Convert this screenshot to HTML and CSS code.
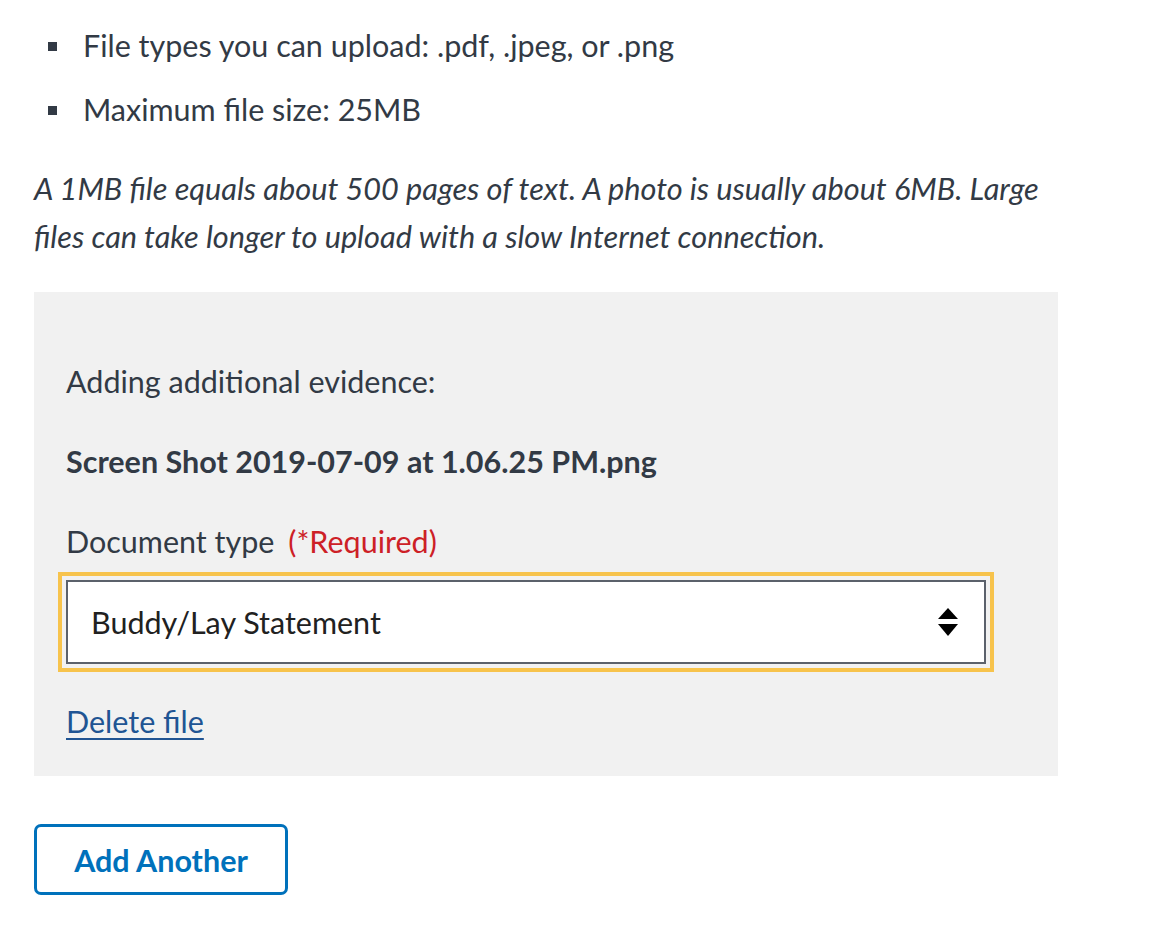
FILE: index.html
```html
<!DOCTYPE html>
<html lang="en">
<head>
<meta charset="utf-8">
<title>Upload evidence</title>
<link rel="stylesheet" href="styles.css">
</head>
<body>
<main class="page">
  <ul class="rules">
    <li class="rule">File types you can upload: .pdf, .jpeg, or .png</li>
    <li class="rule">Maximum file size: 25MB</li>
  </ul>
  <p class="hint">A 1MB file equals about 500 pages of text. A photo is usually about 6MB. Large files can take longer to upload with a slow Internet connection.</p>

  <section class="file-card">
    <p class="card-intro">Adding additional evidence:</p>
    <p class="file-name">Screen Shot 2019-07-09 at 1.06.25 PM.png</p>
    <label class="field-label" for="doctype">Document type <span class="required">(*Required)</span></label>
    <div class="select-wrap">
      <select id="doctype" class="select">
        <option>Buddy/Lay Statement</option>
      </select>
      <svg class="select-arrows" width="20" height="28" viewBox="0 0 20 28" aria-hidden="true">
        <path d="M10 0 L20 11 L0 11 Z" fill="#000"/>
        <path d="M0 16 L20 16 L10 28 Z" fill="#000"/>
      </svg>
    </div>
    <a class="delete-link" href="#">Delete file</a>
  </section>

  <button class="add-btn" type="button">Add Another</button>
</main>
</body>
</html>
```

FILE: styles.css
```css
html, body {
  margin: 0;
  padding: 0;
  background: #ffffff;
}

body {
  font-family: "Lato", "Liberation Sans", sans-serif;
  font-size: 30.5px;
  line-height: 48px;
  color: #323a45;
}

.page {
  padding: 21px 0 40px 34px;
  width: 1024px;
}

.rules {
  list-style: none;
  margin: 0;
  padding: 0;
}

.rule {
  position: relative;
  padding-left: 49px;
  margin-bottom: 16px;
}

.rule::before {
  content: "";
  position: absolute;
  left: 14px;
  top: 21px;
  width: 9px;
  height: 9px;
  background: #323a45;
}

.hint {
  margin: 32px 0 31px 0;
  font-style: italic;
  font-size: 30.7px;
  padding-right: 10px;
}

.file-card {
  background: #f1f1f1;
  padding: 65px 32px 31px 32px;
  display: flex;
  flex-direction: column;
  align-items: flex-start;
}

.card-intro {
  margin: 0 0 32px 0;
}

.file-name {
  margin: 0 0 32px 0;
  font-weight: 700;
}

.field-label {
  display: block;
}

.required {
  color: #cd2026;
  margin-left: 6px;
}

.select-wrap {
  position: relative;
  margin-top: 15px;
  outline: 4px solid #f7c34c;
  outline-offset: 4px;
}

.select {
  display: block;
  appearance: none;
  -webkit-appearance: none;
  width: 920px;
  height: 84px;
  margin: 0;
  padding: 0 60px 0 23px;
  border: 2px solid #5b616b;
  border-radius: 0;
  background: #ffffff;
  font-family: inherit;
  font-size: 30.5px;
  color: #212121;
}

.select-arrows {
  position: absolute;
  right: 28px;
  top: 28px;
  pointer-events: none;
}

.delete-link {
  margin-top: 33px;
  color: #205493;
  text-decoration: underline;
  text-decoration-thickness: 2px;
  text-underline-offset: 5px;
}

.add-btn {
  margin-top: 48px;
  width: 254px;
  height: 71px;
  border: 3px solid #0071bb;
  border-radius: 7px;
  background: #ffffff;
  color: #0071bb;
  font-family: inherit;
  font-size: 30.5px;
  font-weight: 700;
  padding: 0;
}
```
